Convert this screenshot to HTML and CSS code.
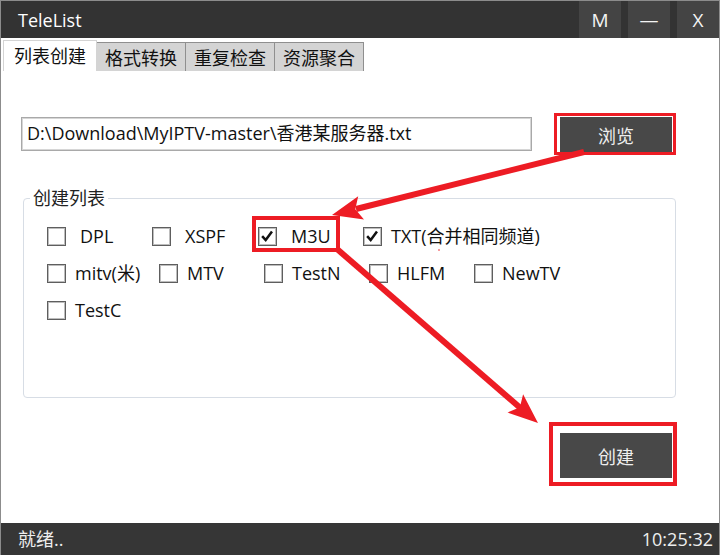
FILE: index.html
```html
<!DOCTYPE html>
<html>
<head>
<meta charset="utf-8">
<title>TeleList</title>
<link rel="stylesheet" href="styles.css">
</head>
<body>
<div class="window">
  <div class="titlebar">
    <div class="title">TeleList</div>
    <div class="wbtns">
      <div class="wbtn">M</div>
      <div class="wbtn">—</div>
      <div class="wbtn">X</div>
    </div>
  </div>
  <div class="tabs">
    <div class="tab active">列表创建</div>
    <div class="tab">格式转换</div>
    <div class="tab">重复检查</div>
    <div class="tab">资源聚合</div>
  </div>
  <div class="content">
    <div class="pathrow">
      <div class="pathinput">D:\Download\MyIPTV-master\香港某服务器.txt</div>
      <div class="mark mark-browse"><div class="btn btn-browse">浏览</div></div>
    </div>
    <fieldset class="group">
      <legend class="legend">创建列表</legend>
      <div class="rows">
        <div class="row">
          <div class="item w105"><span class="cb"></span><span class="lbl sp">DPL</span></div>
          <div class="item w106"><span class="cb"></span><span class="lbl sp">XSPF</span></div>
          <div class="item w105 hl"><span class="cb on"><svg viewBox="0 0 19 19" width="17" height="17"><polyline points="3.5,9 7.5,13.5 14.5,4" fill="none" stroke="#111" stroke-width="2.8"/></svg></span><span class="lbl sp">M3U</span></div>
          <div class="item"><span class="cb on"><svg viewBox="0 0 19 19" width="17" height="17"><polyline points="3.5,9 7.5,13.5 14.5,4" fill="none" stroke="#111" stroke-width="2.8"/></svg></span><span class="lbl">TXT(合并相同频道)</span></div>
        </div>
        <div class="row">
          <div class="item w112"><span class="cb"></span><span class="lbl">mitv(米)</span></div>
          <div class="item w105"><span class="cb"></span><span class="lbl">MTV</span></div>
          <div class="item w105"><span class="cb"></span><span class="lbl">TestN</span></div>
          <div class="item w105"><span class="cb"></span><span class="lbl">HLFM</span></div>
          <div class="item"><span class="cb"></span><span class="lbl">NewTV</span></div>
        </div>
        <div class="row">
          <div class="item"><span class="cb"></span><span class="lbl">TestC</span></div>
        </div>
      </div>
    </fieldset>
    <div class="createrow">
      <div class="mark mark-create"><div class="btn btn-create">创建</div></div>
    </div>
  </div>
  <div class="statusbar">
    <span>就绪..</span>
    <span>10:25:32</span>
  </div>
  <svg class="arrows" width="720" height="555" viewBox="0 0 720 555">
    <line x1="584" y1="152" x2="356" y2="209" stroke="#ed1c24" stroke-width="6"/>
    <polygon points="332,215 364,219.5 355.3,209.2 358.2,196.2" fill="#ed1c24"/>
    <line x1="337" y1="249" x2="521" y2="408.5" stroke="#ed1c24" stroke-width="6"/>
    <polygon points="538,423 507.5,412.5 519.9,407.3 523.1,394.3" fill="#ed1c24"/>
    <circle cx="439" cy="250" r="0.8" fill="#ed1c24"/>
  </svg>
</div>
</body>
</html>
```
FILE: styles.css
```css
html, body {
  margin: 0;
  padding: 0;
  background: #ffffff;
}
body {
  font-family: "Open Sans", "Noto Sans CJK SC", sans-serif;
  font-size: 18px;
  color: #111;
}
.window {
  position: relative;
  width: 720px;
  height: 555px;
  box-sizing: border-box;
  border: 1px solid #8c8c8c;
  border-bottom: none;
  display: flex;
  flex-direction: column;
  background: #fff;
  overflow: hidden;
}
.titlebar {
  height: 37px;
  flex: none;
  background: #333333;
  display: flex;
  align-items: center;
  justify-content: space-between;
  color: #fff;
}
.title {
  padding-left: 17px;
  font-size: 18px;
  line-height: 24px;
}
.wbtns {
  display: flex;
  gap: 7px;
  height: 100%;
}
.wbtn {
  width: 42px;
  height: 37px;
  background: #444444;
  color: #f4f4f4;
  display: flex;
  align-items: center;
  justify-content: center;
  font-size: 19px;
}
.tabs {
  flex: none;
  height: 31px;
  margin-top: 2px;
  padding-left: 2px;
  display: flex;
  align-items: flex-end;
}
.tab {
  box-sizing: border-box;
  height: 29px;
  padding: 1px 8px 0;
  border: 1px solid #8f8f8f;
  border-bottom: none;
  background: #d4d4d4;
  margin-left: -1px;
  display: flex;
  align-items: center;
  line-height: 24px;
}
.tab.active {
  height: 31px;
  padding: 0 10px 1px;
  margin-left: 0;
  background: #fff;
  border-color: #d4d4d4;
  position: relative;
  z-index: 1;
}
.content {
  flex: 1;
  display: flex;
  flex-direction: column;
}
.pathrow {
  margin-top: 42px;
  padding-left: 20px;
  display: flex;
  align-items: flex-start;
}
.pathinput {
  box-sizing: border-box;
  width: 511px;
  height: 34px;
  margin-top: 4px;
  border: 1px solid #a9a9a9;
  box-shadow: inset 0 0 0 1px #d6d6d6;
  padding-left: 5px;
  line-height: 31px;
  white-space: nowrap;
  overflow: hidden;
}
.mark {
  border: 3px solid #ed1c24;
}
.mark-browse {
  margin-left: 22px;
  padding: 1px 1px 0 3px;
}
.btn {
  width: 112px;
  background: #484848;
  color: #eeeeee;
  display: flex;
  align-items: center;
  justify-content: center;
}
.btn-browse {
  height: 35px;
}
.group {
  margin: 31px 43px 0 22px;
  border: 1px solid #d7dde5;
  border-radius: 4px;
  padding: 14px 0 75px 6px;
  min-width: 0;
}
.legend {
  padding: 0 3px;
  line-height: 24px;
  color: #222;
}
.rows {
  display: flex;
  flex-direction: column;
  gap: 13px;
  padding-left: 17px;
}
.row {
  display: flex;
  align-items: center;
  height: 24px;
}
.item {
  display: flex;
  align-items: center;
  gap: 9px;
  flex: none;
}
.w105 { width: 105px; }
.w106 { width: 106px; }
.w112 { width: 112px; }
.hl {
  position: relative;
}
.hl::after {
  content: "";
  position: absolute;
  left: -6px;
  top: -8px;
  width: 88px;
  height: 36px;
  box-sizing: border-box;
  border: 4px solid #ed1c24;
}
.cb {
  box-sizing: border-box;
  width: 19px;
  height: 19px;
  border: 1px solid #5e5e5e;
  box-shadow: inset 0 0 0 1px #bdbdbd;
  background: #fff;
  display: flex;
  align-items: center;
  justify-content: center;
  flex: none;
}
.lbl {
  line-height: 24px;
  white-space: nowrap;
}
.sp {
  padding-left: 5px;
}
.createrow {
  margin-top: 24px;
  padding-right: 42px;
  display: flex;
  justify-content: flex-end;
}
.mark-create {
  border-width: 4px;
  padding: 7px 1px 4px 7px;
}
.btn-create {
  height: 45px;
}
.statusbar {
  flex: none;
  height: 32px;
  background: #363636;
  color: #eeeeee;
  display: flex;
  align-items: center;
  justify-content: space-between;
  padding: 0 6px 0 17px;
  line-height: 24px;
}
.arrows {
  position: absolute;
  left: -1px;
  top: -1px;
  pointer-events: none;
}
```
